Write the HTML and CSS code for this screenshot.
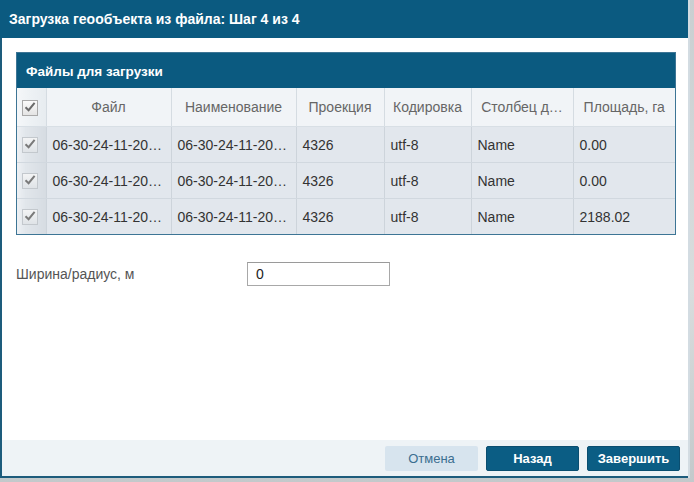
FILE: index.html
```html
<!DOCTYPE html>
<html lang="ru">
<head>
<meta charset="utf-8">
<link rel="stylesheet" href="styles.css">
</head>
<body>
<div class="dialog">
  <div class="titlebar">Загрузка геообъекта из файла: Шаг 4 из 4</div>
  <div class="content">
    <div class="panel">
      <div class="panel-head">Файлы для загрузки</div>
      <table class="grid">
        <colgroup>
          <col class="c-cb"><col class="c-file"><col class="c-name"><col class="c-proj"><col class="c-enc"><col class="c-col"><col class="c-area">
        </colgroup>
        <thead>
          <tr>
            <th class="cb"><span class="chk"><svg viewBox="0 0 16 16" width="16" height="16"><path d="M3.5 8.2 L6.6 11.2 L12.6 3.8" fill="none" stroke="#6b6b6b" stroke-width="2"/></svg></span></th>
            <th>Файл</th><th>Наименование</th><th>Проекция</th><th>Кодировка</th><th>Столбец д…</th><th>Площадь, га</th>
          </tr>
        </thead>
        <tbody>
          <tr>
            <td class="cb"><span class="chk row"><svg viewBox="0 0 16 16" width="16" height="16"><path d="M3.5 8.2 L6.6 11.2 L12.6 3.8" fill="none" stroke="#7a7a7a" stroke-width="2"/></svg></span></td>
            <td>06-30-24-11-20…</td><td>06-30-24-11-20…</td><td>4326</td><td>utf-8</td><td>Name</td><td>0.00</td>
          </tr>
          <tr>
            <td class="cb"><span class="chk row"><svg viewBox="0 0 16 16" width="16" height="16"><path d="M3.5 8.2 L6.6 11.2 L12.6 3.8" fill="none" stroke="#7a7a7a" stroke-width="2"/></svg></span></td>
            <td>06-30-24-11-20…</td><td>06-30-24-11-20…</td><td>4326</td><td>utf-8</td><td>Name</td><td>0.00</td>
          </tr>
          <tr>
            <td class="cb"><span class="chk row"><svg viewBox="0 0 16 16" width="16" height="16"><path d="M3.5 8.2 L6.6 11.2 L12.6 3.8" fill="none" stroke="#7a7a7a" stroke-width="2"/></svg></span></td>
            <td>06-30-24-11-20…</td><td>06-30-24-11-20…</td><td>4326</td><td>utf-8</td><td>Name</td><td>2188.02</td>
          </tr>
        </tbody>
      </table>
    </div>
    <div class="field">
      <label class="field-label">Ширина/радиус, м</label>
      <div class="input">0</div>
    </div>
  </div>
  <div class="footer">
    <button class="btn btn-light">Отмена</button>
    <button class="btn btn-dark">Назад</button>
    <button class="btn btn-dark">Завершить</button>
  </div>
</div>
</body>
</html>
```

FILE: styles.css
```css
html, body {
  margin: 0;
  padding: 0;
}
body {
  width: 694px;
  height: 482px;
  overflow: hidden;
  background: linear-gradient(180deg, #c9cfd1 0%, #d9dddd 60%, #c3c9cb 100%);
  font-family: "Liberation Sans", Arial, sans-serif;
  font-size: 14px;
  color: #333;
}
.dialog {
  width: 690px;
  height: 478px;
  display: flex;
  flex-direction: column;
  background: #fff;
  box-sizing: border-box;
  border-right: 2px solid #d3dce2;
}
.titlebar {
  height: 38px;
  flex: none;
  background: #0b5a80;
  color: #fff;
  font-weight: bold;
  font-size: 14px;
  line-height: 38px;
  padding-left: 9px;
}
.content {
  flex: 1;
  border-left: 2px solid #1d5c7c;
  padding: 14px 11px 0 14px;
}
.panel {
  border: 1px solid #3d7595;
  width: 660px;
  box-sizing: border-box;
}
.panel-head {
  height: 35px;
  background: #0b5a80;
  color: #fff;
  font-weight: bold;
  font-size: 13.5px;
  line-height: 37px;
  padding-left: 9px;
}
.grid {
  width: 100%;
  border-collapse: collapse;
  table-layout: fixed;
}
.c-cb { width: 29px; }
.c-file { width: 125px; }
.c-name { width: 125px; }
.c-proj { width: 88px; }
.c-enc { width: 87px; }
.c-col { width: 102px; }
.grid th {
  height: 38px;
  background: #f1f4f7;
  color: #666;
  font-weight: normal;
  text-align: center;
  border-right: 1px solid #d5dce2;
  border-bottom: 1px solid #d8dfe5;
  padding: 0 4px;
  white-space: nowrap;
  overflow: hidden;
}
.grid th:last-child { border-right: none; }
.grid td {
  height: 35px;
  background: #e2e7ed;
  color: #333;
  border-right: 1px solid #cdd4db;
  border-bottom: 1px solid #d1d8df;
  padding: 0 6px;
  white-space: nowrap;
  overflow: hidden;
}
.grid td:last-child { border-right: none; }
.grid tbody tr:last-child td { border-bottom: none; }
.grid .cb {
  padding: 0;
  text-align: center;
  background: linear-gradient(90deg, #eef1f4 0%, #e1e6eb 30%, #d6dce2 100%);
}
.grid th.cb {
  background: linear-gradient(90deg, #f5f7f9 0%, #eef2f5 40%, #e7ecf0 100%);
}
.chk {
  display: inline-block;
  width: 14px;
  height: 14px;
  border: 1px solid #a9a9a9;
  background: linear-gradient(180deg, #fbfbfb, #e4e4e4);
  vertical-align: middle;
  position: relative;
  margin-left: -2px;
}
.chk svg {
  position: absolute;
  left: -1px;
  top: -2px;
}
.chk.row {
  border-color: #c3c8cd;
  background: linear-gradient(180deg, #f3f4f5, #dfe3e7);
}
.field {
  display: flex;
  align-items: center;
  margin-top: 27px;
}
.field-label {
  width: 231px;
  color: #555;
}
.input {
  width: 143px;
  height: 24px;
  box-sizing: border-box;
  border: 1px solid #a8a8a8;
  border-top-color: #9a9a9a;
  padding-left: 8px;
  line-height: 22px;
  color: #222;
}
.footer {
  flex: none;
  height: 36px;
  background: #eef3f6;
  border-left: 2px solid #1d5c7c;
  border-bottom: 2px solid #1d5c7c;
  display: flex;
  justify-content: flex-end;
  align-items: center;
  gap: 8px;
  padding-right: 8px;
}
.btn {
  width: 93px;
  height: 25px;
  border: none;
  border-radius: 2px;
  font-family: "Liberation Sans", Arial, sans-serif;
  font-size: 13px;
  padding: 0;
}
.btn-light {
  background: #d7e4ee;
  color: #3b6e90;
}
.btn-dark {
  background: #0b5d84;
  color: #fff;
  font-weight: bold;
  border: 1px solid #0a4e70;
}
```
